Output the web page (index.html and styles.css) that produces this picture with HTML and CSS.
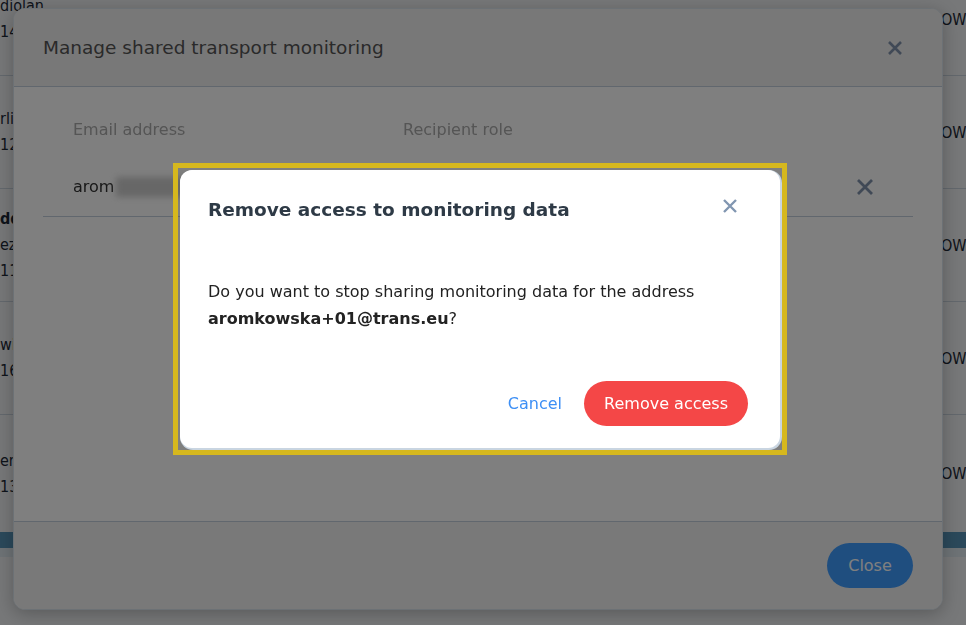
FILE: index.html
```html
<!DOCTYPE html>
<html lang="en">
<head>
  <meta charset="UTF-8">
  <meta name="viewport" content="width=device-width, initial-scale=1.0">
  <title>Shared transport monitoring</title>
  <link rel="stylesheet" href="styles.css">
</head>
<body>
  <!-- Page underneath the modals -->
  <div class="page">
    <div class="page-row">
      <div class="cell-left"><span>diolan</span><span>14.06.2024 08:00</span></div>
      <div class="cell-right">OWF 1204</div>
    </div>
    <div class="page-row">
      <div class="cell-left"><span>rlin Hbf</span><span>12.06.2024 10:30</span></div>
      <div class="cell-right">OWF 3381</div>
    </div>
    <div class="page-row">
      <div class="cell-left"><span class="strong">dd Logistics</span><span>ezno</span><span>11.06.2024 14:15</span></div>
      <div class="cell-right">OWF 5120</div>
    </div>
    <div class="page-row">
      <div class="cell-left"><span>wice</span><span>16.06.2024 07:45</span></div>
      <div class="cell-right">OWF 7761</div>
    </div>
    <div class="page-row last">
      <div class="cell-left"><span>en</span><span>13.06.2024 12:00</span></div>
      <div class="cell-right">OW9 0042</div>
    </div>
    <div class="page-bar"></div>
  </div>

  <!-- Manage modal -->
  <div class="backdrop">
    <div class="modal">
      <div class="modal-header">
        <h2>Manage shared transport monitoring</h2>
        <button class="icon-btn" aria-label="Close">
          <svg width="16" height="16" viewBox="0 0 16 16"><path d="M2 2L14 14M14 2L2 14" stroke="#8093ad" stroke-width="2.6" fill="none"/></svg>
        </button>
      </div>
      <div class="modal-body">
        <div class="recipients">
          <div class="th">Email address</div>
          <div class="th">Recipient role</div>
          <div class="th"></div>
          <div class="td">arom<span class="blurred"></span></div>
          <div class="td"></div>
          <div class="td">
            <button class="icon-btn" aria-label="Remove">
              <svg width="18" height="18" viewBox="0 0 18 18"><path d="M2 2L16 16M16 2L2 16" stroke="#8093ad" stroke-width="2.8" fill="none"/></svg>
            </button>
          </div>
        </div>
      </div>
      <div class="modal-footer">
        <button class="btn-close">Close</button>
      </div>
    </div>
  </div>

  <!-- Confirmation dialog -->
  <div class="dialog-layer">
    <div class="highlight">
      <div class="dialog">
        <div class="dialog-head">
          <h3>Remove access to monitoring data</h3>
          <button class="icon-btn dialog-x" aria-label="Close">
            <svg width="16" height="16" viewBox="0 0 16 16"><path d="M2 2L14 14M14 2L2 14" stroke="#8196b1" stroke-width="2.4" fill="none"/></svg>
          </button>
        </div>
        <p class="dialog-text">Do you want to stop sharing monitoring data for the address <strong>aromkowska+01@trans.eu</strong>?</p>
        <div class="dialog-actions">
          <button class="btn-link">Cancel</button>
          <button class="btn-danger">Remove access</button>
        </div>
      </div>
    </div>
  </div>
</body>
</html>
```

FILE: styles.css
```css
/* Base */
* {
  margin: 0;
  padding: 0;
  box-sizing: border-box;
}

body {
  font-family: "DejaVu Sans", sans-serif;
  font-size: 16px;
  color: #1c2836;
  background-color: #eef0f2;
  height: 625px;
  overflow: hidden;
}

button {
  font-family: inherit;
  border: none;
  background: none;
  cursor: pointer;
}

/* Page underneath */
.page {
  margin-top: -37px;
  font-family: "DejaVu Sans Condensed", "DejaVu Sans", sans-serif;
}

.page-row {
  display: flex;
  align-items: center;
  height: 113px;
  border-bottom: 1px solid #c6d0da;
}

.page-row.last {
  height: 117px;
  border-bottom: none;
}

.cell-left {
  flex: 1;
  display: flex;
  flex-direction: column;
  line-height: 26px;
  white-space: nowrap;
}

.cell-left .strong {
  font-weight: bold;
}

.cell-right {
  width: 25px;
  overflow: hidden;
  white-space: nowrap;
}

.page-bar {
  height: 25px;
  background-color: #5692b6;
  border-bottom: 9px solid #dce6ec;
}

/* Manage modal */
.backdrop {
  position: fixed;
  inset: 0;
  display: flex;
  padding: 8px 23px 15px 13px;
}

.modal {
  flex: 1;
  display: flex;
  flex-direction: column;
  background-color: #fff;
  border: 1px solid #d9e2ea;
  border-radius: 12px;
  overflow: hidden;
  box-shadow: 0 4px 18px rgba(0, 0, 0, 0.25);
}

.modal-header {
  height: 78px;
  display: flex;
  justify-content: space-between;
  align-items: center;
  padding: 0 29px;
  background-color: #f0f0f0;
  border-bottom: 1px solid #c2cfdc;
}

.modal-header h2 {
  font-size: 18.5px;
  font-weight: normal;
  color: #555;
}

.icon-btn {
  width: 36px;
  height: 36px;
  display: flex;
  align-items: center;
  justify-content: center;
}

.modal-body {
  flex: 1;
  padding: 28px 29px 0;
}

.recipients {
  display: grid;
  grid-template-columns: 330px 1fr 66px;
}

.th {
  line-height: 30px;
  padding: 0 0 12px 30px;
  color: #aaa;
}

.td {
  height: 60px;
  display: flex;
  align-items: center;
  padding-left: 30px;
  color: #333;
  border-bottom: 1px solid #c2cfdc;
}

.td:last-child {
  padding-left: 0;
}

.blurred {
  display: inline-block;
  width: 90px;
  height: 20px;
  margin-left: 2px;
  background-color: #cfcfcf;
  filter: blur(3px);
}

.modal-footer {
  height: 88px;
  display: flex;
  justify-content: flex-end;
  padding: 21px 29px 0;
  background-color: #f3f3f3;
  border-top: 1px solid #c2cfdc;
}

.btn-close {
  width: 86px;
  height: 45px;
  border-radius: 23px;
  background-color: #3f9cff;
  color: #fff;
  font-size: 16px;
}

/* Confirmation dialog */
.dialog-layer {
  position: fixed;
  inset: 0;
  background-color: rgba(0, 0, 0, 0.5);
  display: flex;
  align-items: flex-start;
  padding: 163px 0 0 173px;
}

.highlight {
  border: 5px solid #d6b81e;
  padding: 2px;
}

.dialog {
  width: 600px;
  height: 278px;
  display: flex;
  flex-direction: column;
  background-color: #fff;
  border-radius: 12px;
  padding: 22px 32px 22px 28px;
  box-shadow: 1px 1px 0 1px #c9d5e1;
}

.dialog-head {
  display: flex;
  justify-content: space-between;
  align-items: flex-start;
}

.dialog-head h3 {
  font-size: 18.5px;
  line-height: 36px;
  color: #2e3a46;
}

.dialog-x {
  margin-top: -4px;
}

.dialog-text {
  margin-top: 50px;
  line-height: 27px;
  color: #222;
}

.dialog-actions {
  margin-top: auto;
  display: flex;
  justify-content: flex-end;
}

.btn-link {
  height: 45px;
  padding: 0 22px;
  color: #3d8ff5;
  font-size: 16px;
}

.btn-danger {
  height: 45px;
  padding: 0 20px;
  border-radius: 23px;
  background-color: #f44747;
  color: #fff;
  font-size: 16px;
}
```
